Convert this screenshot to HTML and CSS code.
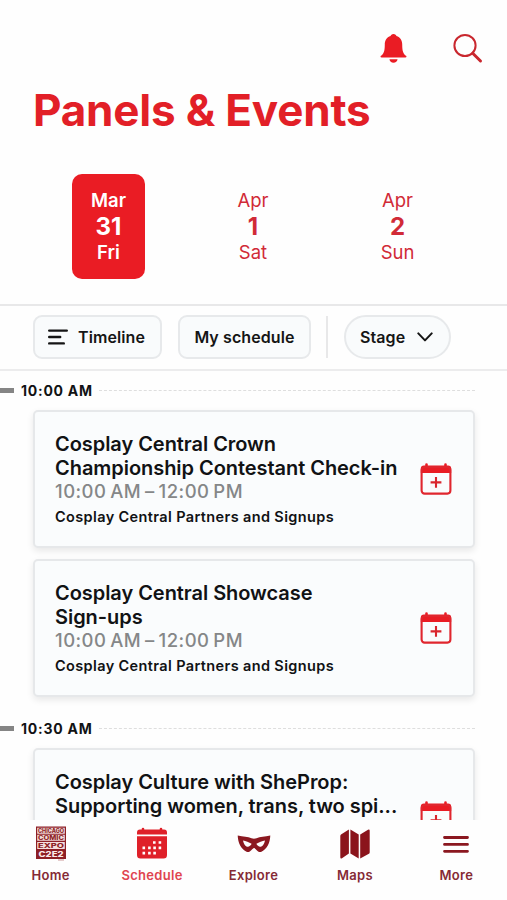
FILE: index.html
```html
<!DOCTYPE html>
<html lang="en">
<head>
<meta charset="utf-8">
<title>Panels &amp; Events</title>
<link rel="stylesheet" href="styles.css">
</head>
<body>
<svg class="defs" width="0" height="0" aria-hidden="true">
  <symbol id="calendar-add" viewBox="0 0 32 32">
    <path d="M4 2.600h24a3.200 3.200 0 0 1 3.200 3.200V10H.8V5.800A3.200 3.200 0 0 1 4 2.600Z" fill="#e91c24"/>
    <path d="M6.500 1.500v2M25.500 1.500v2" stroke="#e91c24" stroke-width="2.600" stroke-linecap="round"/>
    <rect x="1.600" y="4" width="28.800" height="26.600" rx="3" fill="none" stroke="#e0262e" stroke-width="2.100"/>
    <path d="M16 14v10.800M10.600 19.400h10.800" stroke="#d9262e" stroke-width="2.100"/>
  </symbol>
</svg>
<div class="app">
  <header class="top">
    <svg class="bell" viewBox="0 0 28 32"><path d="M14 1c1.800 0 2.800 1 3 2.200 4.200 1.300 6 4.800 6 8.800 0 7 1.200 9.300 4 11.600.700.700.4 1.800-.700 1.800H1.700C.600 25.400.300 24.300 1 23.600 3.800 21.300 5 19 5 12c0-4 1.800-7.500 6-8.800C11.200 2 12.200 1 14 1ZM9.800 27.200h8.400c-.3 2.300-2 3.600-4.200 3.600s-3.900-1.300-4.200-3.600Z" fill="#ea1c24"/></svg>
    <svg class="search" viewBox="0 0 30 30"><circle cx="12" cy="12" r="10.600" fill="none" stroke="#c9272e" stroke-width="2"/><path d="m19.700 19.700 7.800 7.800" stroke="#c9272e" stroke-width="3" stroke-linecap="round"/></svg>
  </header>
  <h1>Panels &amp; Events</h1>
  <nav class="days">
    <div class="day active"><span>Mar</span><b>31</b><span>Fri</span></div>
    <div class="day"><span>Apr</span><b>1</b><span>Sat</span></div>
    <div class="day"><span>Apr</span><b>2</b><span>Sun</span></div>
  </nav>
  <div class="filters">
    <button class="chip timeline"><svg width="20" height="16" viewBox="0 0 20 16"><path d="M1.200 1.600h17.600M1.200 8h11M1.200 14.400h14.600" stroke="#151515" stroke-width="2.400" stroke-linecap="round"/></svg>Timeline</button>
    <button class="chip mine">My schedule</button>
    <i class="divider"></i>
    <button class="chip stage">Stage<svg width="16" height="10" viewBox="0 0 16 10"><path d="m1.300 1.400 6.700 7 6.700-7" fill="none" stroke="#151515" stroke-width="2" stroke-linecap="round" stroke-linejoin="round"/></svg></button>
  </div>
  <main class="list">
    <div class="time"><i></i><span>10:00 AM</span><hr></div>
    <article class="card">
      <div class="info"><h2>Cosplay Central Crown<br>Championship Contestant Check-in</h2><p class="hours">10:00 AM – 12:00 PM</p><p class="place">Cosplay Central Partners and Signups</p></div>
      <svg class="add"><use href="#calendar-add"/></svg>
    </article>
    <article class="card">
      <div class="info"><h2>Cosplay Central Showcase<br>Sign-ups</h2><p class="hours">10:00 AM – 12:00 PM</p><p class="place">Cosplay Central Partners and Signups</p></div>
      <svg class="add"><use href="#calendar-add"/></svg>
    </article>
    <div class="time second"><i></i><span>10:30 AM</span><hr></div>
    <article class="card">
      <div class="info"><h2>Cosplay Culture with SheProp:<br>Supporting women, trans, two spi...</h2></div>
      <svg class="add"><use href="#calendar-add"/></svg>
    </article>
  </main>
  <nav class="tabs">
    <div class="tab">
      <svg width="32" height="36" viewBox="0 0 32 36"><rect x="1" y="1.500" width="30" height="32.500" fill="#8e1f26"/><path d="M2.200 2.700h27.600v6H2.200zM2.200 9.700h27.600v6H2.200zM2.200 16.900h27.600v7H2.200z" fill="#f3dede"/><g class="logo"><text x="3" y="7.600" textLength="26" lengthAdjust="spacingAndGlyphs" font-size="5.600">CHICAGO</text><text x="3" y="14.600" textLength="26" lengthAdjust="spacingAndGlyphs" font-size="5.600">COMIC</text><text x="3" y="22.500" textLength="26" lengthAdjust="spacingAndGlyphs" font-size="6.200">EXPO</text><text x="3.500" y="31.800" textLength="25" lengthAdjust="spacingAndGlyphs" font-size="7.600" class="light">C2E2</text></g><path d="M23 35h6" stroke="#c99"/></svg>
      <span>Home</span>
    </div>
    <div class="tab current">
      <svg width="32" height="36" viewBox="0 0 32 36"><path d="M4 4.500h24a3 3 0 0 1 3 3v2H1v-2a3 3 0 0 1 3-3ZM1 11.300h30V30a3.500 3.500 0 0 1-3.500 3.500h-23A3.500 3.500 0 0 1 1 30Z" fill="#df2029"/><path d="M7 4v2M25 4v2" stroke="#df2029" stroke-width="2.600" stroke-linecap="round"/><path d="M17 17.500h2.600m3 0h2.600M6.500 22.800h2.600m3 0h2.600m2.600 0h2.600m2.700 0h2.600M6.500 28.100h2.600m3 0h2.600m2.600 0h2.600" stroke="#fff" stroke-width="2.700"/></svg>
      <span>Schedule</span>
    </div>
    <div class="tab">
      <svg width="34" height="36" viewBox="0 0 34 36"><path fill-rule="evenodd" d="M.7 10.500c5.500 1.500 10.300 1.200 13.800 2.700q2.500.9 5 0c3.500-1.500 8.300-1.200 13.800-2.700-.2 7-3.300 14-9.300 16.500-3.500.8-5.500-4-7-4s-3.500 4.800-7 4C4 24.500.9 17.500.7 10.500Zm5.300 4.900c.8 3.600 2.700 6.600 5.100 6.300 1.800-.2 3-1.700 3.500-2.900-2.500-1.700-5.900-2.900-8.600-3.400Zm22 0c-2.700.5-6.100 1.700-8.600 3.400.5 1.200 1.700 2.700 3.500 2.900 2.400.3 4.300-2.700 5.100-6.300Z" fill="#8b1820"/></svg>
      <span>Explore</span>
    </div>
    <div class="tab">
      <svg width="32" height="36" viewBox="0 0 32 36"><path d="M2 9.400 9.900 4.600v24L3 33.200q-1.700.9-1.700-1V11q0-1 .7-1.600ZM11.400 4.600l8.300 4.900v23.900l-8.300-4.800ZM21.200 9.500 29 4.700q1.700-.8 1.700 1v21.500q0 1-.8 1.600l-8.700 4.600Z" fill="#8b141c"/></svg>
      <span>Maps</span>
    </div>
    <div class="tab">
      <svg width="32" height="36" viewBox="0 0 32 36"><path d="M4.500 12.500h23M4.500 19.400h23M4.500 26.300h23" stroke="#8b1820" stroke-width="2.800" stroke-linecap="round"/></svg>
      <span>More</span>
    </div>
  </nav>
</div>
</body>
</html>
```
FILE: styles.css
```css
* { box-sizing: border-box; }
body { margin: 0; background: #fefefe; font-family: Inter, "Liberation Sans", sans-serif; color: #111214; }
h1, h2, p { margin: 0; }
.defs { display: block; }
.app { height: 900px; display: flex; flex-direction: column; overflow: hidden; }
.top { height: 80px; flex: none; display: flex; justify-content: flex-end; align-items: flex-start; gap: 45px; padding: 33px 24px 0 0; }
.bell { width: 29px; height: 31px; }
.search { width: 30px; height: 31px; }
h1 { height: 94px; flex: none; padding-left: 33px; color: #e21f27; font-size: 44px; line-height: 60px; font-weight: 700; letter-spacing: -0.2px; white-space: nowrap; }
.days { height: 130px; flex: none; display: flex; gap: 71.500px; padding-left: 72px; }
.day { width: 73px; height: 105px; padding-top: 13px; border-radius: 10px; display: flex; flex-direction: column; align-items: center; color: #d12a37; font-size: 18.500px; line-height: 26px; }
.day b { font-size: 24px; line-height: 27px; font-weight: 700; }
.day span:last-child { line-height: 25px; }
.active { background: #ea1c24; color: #fff; font-weight: 600; }
.filters { height: 67px; flex: none; display: flex; align-items: flex-start; padding: 9px 0 0 33px; border-top: 2px solid #e8e8e9; border-bottom: 2px solid #ececed; }
.chip { height: 44px; display: flex; align-items: center; padding: 0 15px; border: 2px solid #e7e9eb; border-radius: 9px; background: #f9fbfc; color: #151515; font: 600 16px/24px Inter, sans-serif; letter-spacing: 0.1px; white-space: nowrap; }
.timeline { width: 129px; gap: 10px; padding: 0 13px; margin-right: 16px; }
.mine { width: 133px; justify-content: center; padding: 0; }
.divider { width: 2px; height: 42px; background: #e8e8e9; margin: 1px 16px 0 15px; }
.stage { width: 107px; gap: 12px; border-radius: 22px; padding: 0 14px; }
.list { flex: 1; min-height: 0; overflow: hidden; }
.time { height: 39px; display: flex; align-items: center; font-size: 14px; font-weight: 700; letter-spacing: 0.750px; }
.time i { width: 14px; height: 5px; background: #858585; margin-right: 7px; }
.time span { width: 72px; white-space: nowrap; }
.time hr { flex: 1; margin: 0 32px 0 6px; border: 0; border-top: 1px dashed #dedede; }
.second { height: 40px; margin-top: 8.500px; }
.card { height: 138px; margin: 0 32px 11px 33px; padding: 20px 21px 0 20px; border: 2px solid #e6e8ea; border-radius: 5px; background: #fafcfd; box-shadow: 0 3px 7px #00000017; display: flex; justify-content: space-between; }
.info { white-space: nowrap; }
h2 { font-size: 20px; line-height: 24px; font-weight: 600; letter-spacing: -0.050px; }
.hours { color: #858788; font-size: 18.500px; line-height: 23px; font-weight: 500; letter-spacing: 0.450px; word-spacing: -1.500px; }
.place { font-size: 14.500px; line-height: 28px; font-weight: 600; letter-spacing: 0.370px; }
.add { width: 32px; height: 32px; flex: none; margin-top: 31px; }
.tabs { height: 80px; flex: none; display: flex; background: #fefefe; }
.tab { flex: 1; display: flex; flex-direction: column; align-items: center; padding-top: 5px; color: #852a35; font-size: 13px; line-height: 20px; font-weight: 600; letter-spacing: 0.300px; }
.tab span { margin-top: 4px; }
.current { color: #e04450; }
.logo { font-family: Inter, sans-serif; font-weight: 800; fill: #8e1f26; letter-spacing: 0; }
.logo .light { fill: #fbeaea; }
```
